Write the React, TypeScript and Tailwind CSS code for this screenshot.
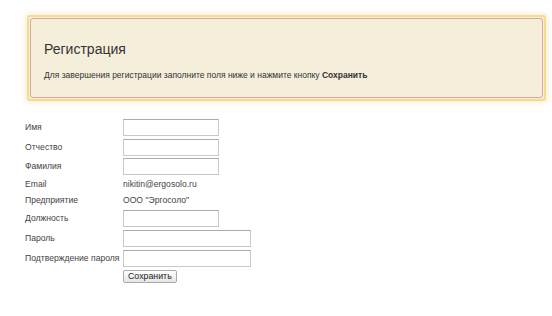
import React from 'react';

const rows: { label: string; h: string; kind: 'input' | 'wide' | 'text'; value?: string }[] = [
  { label: 'Имя', h: 'h-[20px]', kind: 'input' },
  { label: 'Отчество', h: 'h-[20px]', kind: 'input' },
  { label: 'Фамилия', h: 'h-[19px]', kind: 'input' },
  { label: 'Email', h: 'h-[17px]', kind: 'text', value: 'nikitin@ergosolo.ru' },
  { label: 'Предприятие', h: 'h-[14px]', kind: 'text', value: 'ООО "Эргосоло"' },
  { label: 'Должность', h: 'h-[22px]', kind: 'input' },
  { label: 'Пароль', h: 'h-[18px]', kind: 'wide' },
  { label: 'Подтверждение пароля', h: 'h-[22px]', kind: 'wide' },
];

export default function App() {
  return (
    <div className="w-[552px] h-[316px] bg-white text-[#444] font-['Liberation_Sans',Arial,sans-serif] overflow-hidden">
      {/* Notice box */}
      <div className="pt-[15px] pl-[27px] pr-[6px]">
        <div className="h-[86px] rounded-[3px] border-2 border-[#f3de8c] bg-[#f5eedb] p-[1px] shadow-[0_0_5px_2px_rgba(245,232,200,0.7)]">
          <div className="h-full rounded-[3px] border border-[#d9aa9c] pl-[13px] pt-[21px]">
            <h1 className="text-[14px] leading-[18px] text-[#333]">Регистрация</h1>
            <p className="mt-[12px] text-[8.5px] leading-[11px] text-[#333]">
              Для завершения регистрации заполните поля ниже и нажмите кнопку <b>Сохранить</b>
            </p>
          </div>
        </div>
      </div>

      {/* Form */}
      <form className="mt-[16px] pl-[25px] flex flex-col text-[8.6px]">
        {rows.map((r) => (
          <div key={r.label} className={`flex items-center ${r.h}`}>
            <span className="w-[98px] shrink-0 whitespace-nowrap">{r.label}</span>
            {r.kind === 'text' && <span className="text-[#444]">{r.value}</span>}
            {r.kind === 'input' && (
              <input className="w-[96px] h-[17px] border border-[#c9c9c9] border-t-[#aaa] bg-white outline-none" />
            )}
            {r.kind === 'wide' && (
              <input className="w-[128px] h-[17px] border border-[#c9c9c9] border-t-[#aaa] bg-white outline-none" />
            )}
          </div>
        ))}
        <div className="flex items-center h-[14px]">
          <span className="w-[98px] shrink-0" />
          <button
            type="button"
            className="h-[13px] px-[4px] rounded-[2px] border border-[#aaa] bg-gradient-to-b from-white to-[#e6e6e6] text-[8.8px] leading-[11px] text-[#222]"
          >
            Сохранить
          </button>
        </div>
      </form>
    </div>
  );
}
